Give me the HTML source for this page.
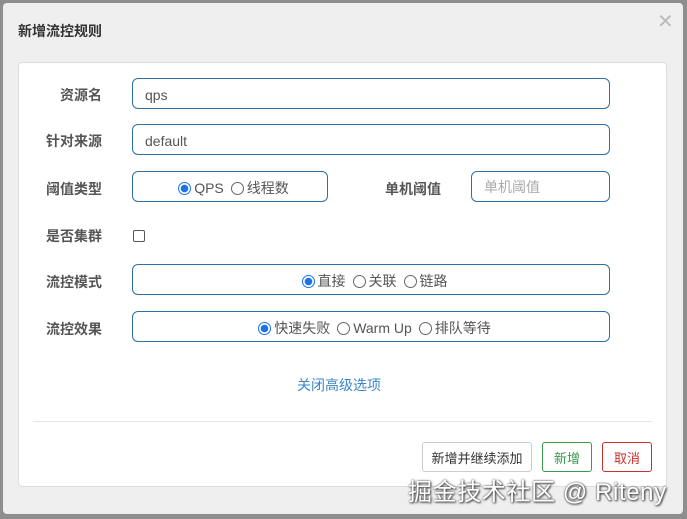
<!DOCTYPE html><html><head><meta charset="utf-8"><style>
*{box-sizing:border-box;margin:0;padding:0}
body{width:687px;height:519px;background:#8e8e8e;font-family:"Liberation Sans","Noto Sans CJK SC",sans-serif;position:relative;overflow:hidden}
.dlg{position:absolute;left:3px;top:3px;width:680px;height:511px;background:#efefef;border-radius:4px}
.title{position:absolute;left:15px;top:18px;font-size:14px;font-weight:bold;color:#333}
.x{position:absolute;left:654px;top:6px;font-size:20px;color:#bbb}
.panel{position:absolute;left:18px;top:62px;width:649px;height:425px;background:#fff;border:1px solid #ddd;border-radius:4px}
.lbl{position:absolute;font-size:14px;font-weight:bold;color:#555;text-align:right;width:84px}
.box{position:absolute;border:1px solid #2e6fa5;border-radius:6px;height:31px;font-size:14px;color:#555;display:flex;align-items:center;padding-top:3px}
.c{justify-content:center}
.r{display:inline-block;width:13px;height:13px;border:1px solid #666;border-radius:50%;margin:0 3px 0 7px;vertical-align:-1px}
.r.on{border:1px solid #1a73e8;background:radial-gradient(#1a73e8 3.5px,#fff 4px)}
.btn{position:absolute;top:442px;height:30px;border:1px solid #ccc;border-radius:3px;font-size:13px;display:flex;align-items:center;justify-content:center;background:#fff}
.wm{position:absolute;left:408px;top:472px;font-size:24px;letter-spacing:0.6px;color:#fff;text-shadow:0 0 2px #444,1px 1px 2px #333}
</style></head><body>
<div class="dlg">
<div class="title">新增流控规则</div><div class="x">✕</div>
</div>
<div class="panel"></div>
<div class="lbl" style="left:18px;top:85px">资源名</div>
<div class="box" style="left:132px;top:78px;width:478px;padding-left:12px">qps</div>
<div class="lbl" style="left:18px;top:131px">针对来源</div>
<div class="box" style="left:132px;top:124px;width:478px;padding-left:12px">default</div>
<div class="lbl" style="left:18px;top:179px">阈值类型</div>
<div class="box c" style="left:132px;top:171px;width:196px"><span class="r on"></span>QPS <span class="r"></span>线程数</div>
<div class="lbl" style="left:357px;top:179px">单机阈值</div>
<div class="box" style="left:471px;top:171px;width:139px;padding-left:12px;padding-top:0;color:#aaa">单机阈值</div>
<div class="lbl" style="left:18px;top:226px">是否集群</div>
<div style="position:absolute;left:133px;top:230px;width:12px;height:12px;border:1px solid #555;border-radius:2px"></div>
<div class="lbl" style="left:18px;top:272px">流控模式</div>
<div class="box c" style="left:132px;top:264px;width:478px"><span class="r on"></span>直接 <span class="r"></span>关联 <span class="r"></span>链路</div>
<div class="lbl" style="left:18px;top:319px">流控效果</div>
<div class="box c" style="left:132px;top:311px;width:478px"><span class="r on"></span>快速失败 <span class="r"></span>Warm Up <span class="r"></span>排队等待</div>
<div style="position:absolute;left:297px;top:375px;font-size:14px;color:#3a87c8">关闭高级选项</div>
<div style="position:absolute;left:33px;top:421px;width:619px;height:1px;background:#e5e5e5"></div>
<div class="btn" style="left:422px;width:110px;color:#333">新增并继续添加</div>
<div class="btn" style="left:542px;width:50px;color:#3a9a4a;border-color:#3a9a4a">新增</div>
<div class="btn" style="left:602px;width:50px;color:#c9302c;border-color:#c9302c">取消</div>
<div class="wm">掘金技术社区 @ Riteny</div>
</body></html>
